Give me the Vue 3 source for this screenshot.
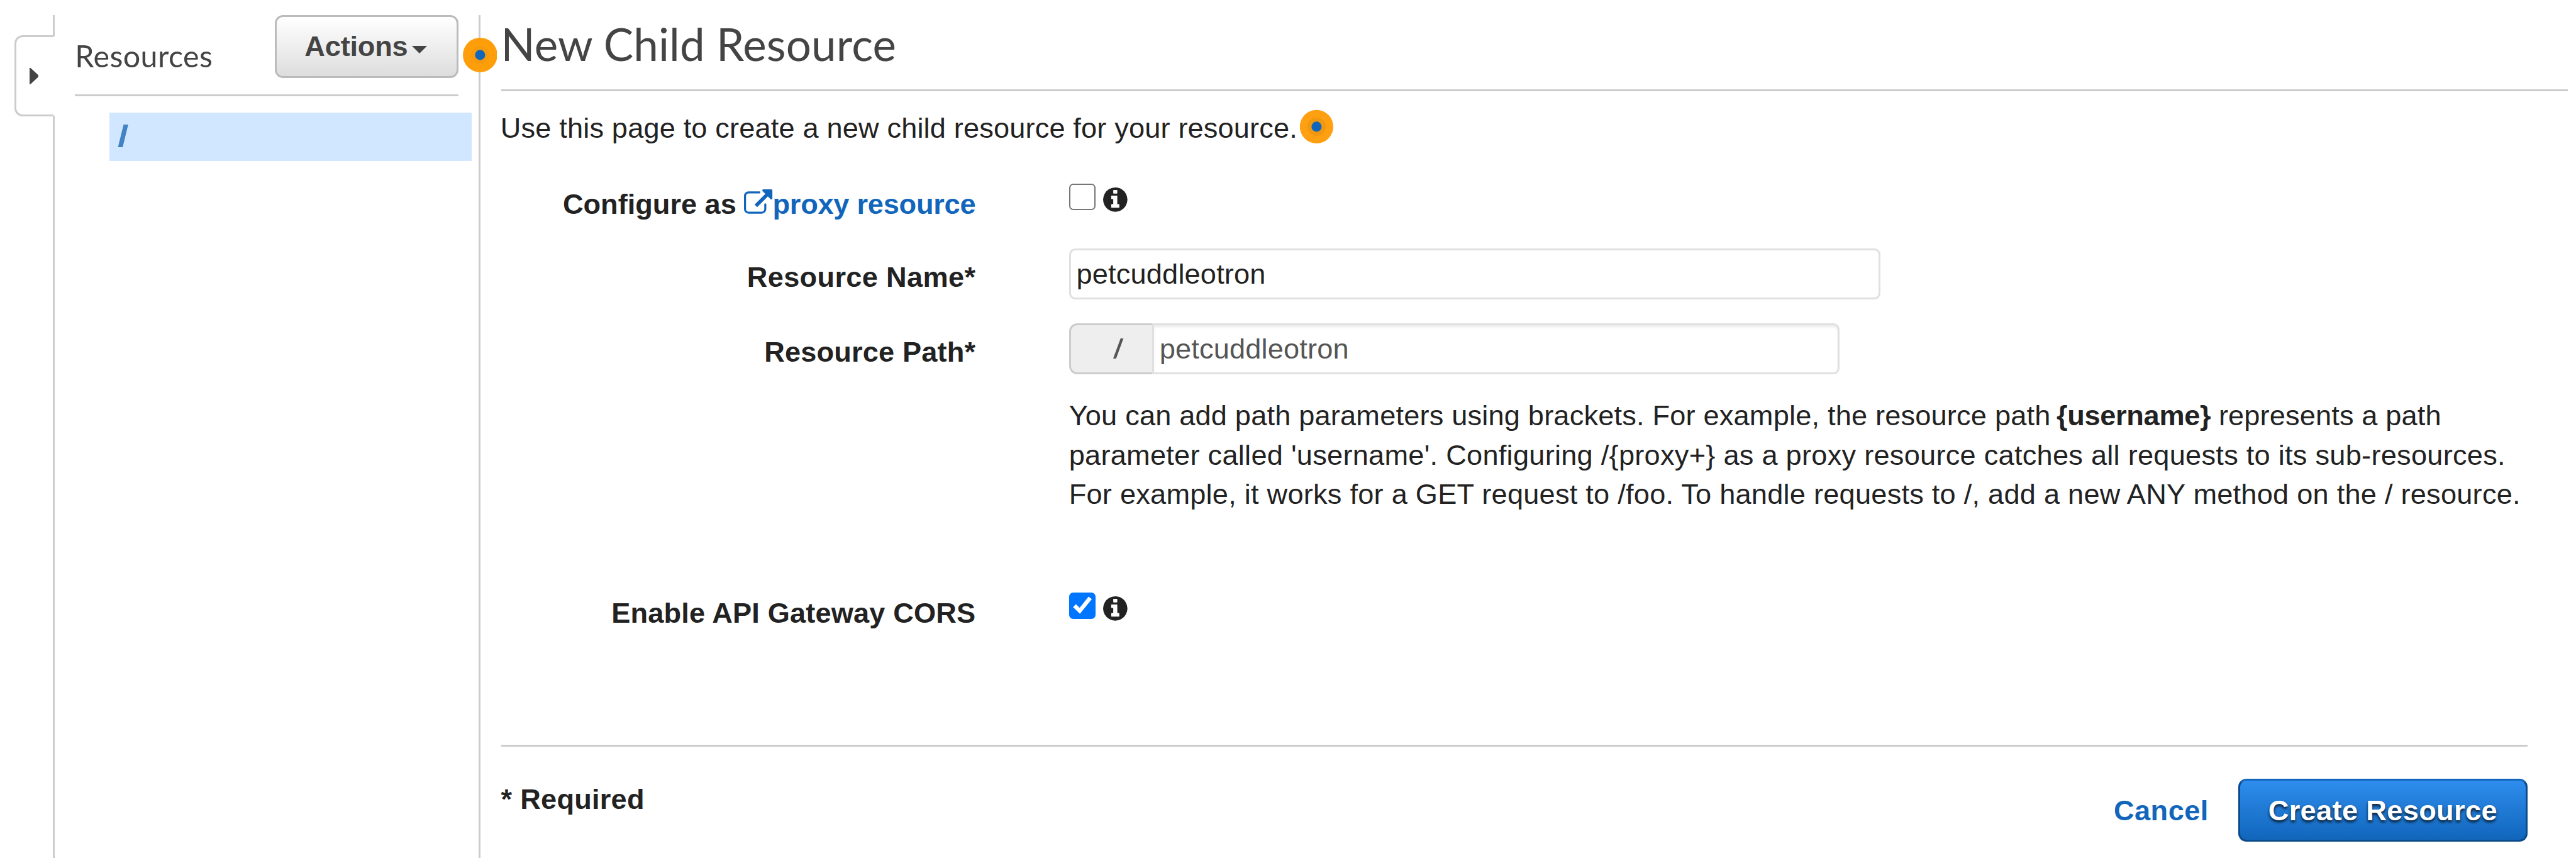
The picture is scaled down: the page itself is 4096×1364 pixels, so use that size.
<script setup>
const infoPath = 'M1152 1376v-160q0-14-9-23t-23-9h-96v-512q0-14-9-23t-23-9h-320q-14 0-23 9t-9 23v160q0 14 9 23t23 9h96v320h-96q-14 0-23 9t-9 23v160q0 14 9 23t23 9h448q14 0 23-9t9-23zm-128-896v-160q0-14-9-23t-23-9h-192q-14 0-23 9t-9 23v160q0 14 9 23t23 9h192q14 0 23-9t9-23zm640 416q0 209-103 385.5t-279.5 279.5-385.5 103-385.5-103-279.5-279.5-103-385.5 103-385.5 279.5-279.5 385.5-103 385.5 103 279.5 279.5 103 385.5z'
</script>

<template>
  <div class="page">
    <div class="rail">
      <div class="rail-top"></div>
      <div class="rail-tab">
        <svg class="rail-arrow" viewBox="0 0 18 32"><path d="M0 0h2l16 15v2L2 32H0z" /></svg>
      </div>
      <div class="rail-rest"></div>
    </div>

    <aside class="sidebar">
      <div class="side-head">
        <span class="side-title">Resources</span>
        <button class="actions"><span>Actions</span><i class="caret"></i></button>
      </div>
      <div class="tree-item"><span class="slash">/</span></div>
      <svg class="hotspot side-hotspot" viewBox="0 0 68 68">
        <circle cx="34" cy="34" r="34" fill="#ff9e0b" />
        <circle cx="34" cy="34" r="18" fill="#f89b0a" />
        <circle cx="34" cy="34" r="10" fill="#1166bb" />
      </svg>
    </aside>

    <main class="main">
      <h1 class="title">New Child Resource</h1>
      <div class="intro">
        <span class="intro-text">Use this page to create a new child resource for your resource.</span>
        <svg class="hotspot" viewBox="0 0 68 68">
          <circle cx="34" cy="34" r="33" fill="#ff9f12" />
          <circle cx="34" cy="34" r="18" fill="#f0980f" />
          <circle cx="34" cy="34" r="10" fill="#1166bb" />
        </svg>
      </div>

      <div class="row row-proxy">
        <div class="label">Configure as <a class="link"><svg class="ext" viewBox="0 0 1792 1536"><path d="M1408 928v320q0 119-84.5 203.5t-203.5 84.5h-832q-119 0-203.5-84.5t-84.5-203.5v-832q0-119 84.5-203.5t203.5-84.5h704q14 0 23 9t9 23v64q0 14-9 23t-23 9h-704q-66 0-113 47t-47 113v832q0 66 47 113t113 47h832q66 0 113-47t47-113v-320q0-14 9-23t23-9h64q14 0 23 9t9 23zm384-864v512q0 26-19 45t-45 19-45-19l-176-176-652 652q-10 10-23 10t-23-10l-114-114q-10-10-10-23t10-23l652-652-176-176q-19-19-19-45t19-45 45-19h512q26 0 45 19t19 45z" /></svg>proxy resource</a></div>
        <span class="check"></span>
        <svg class="info" viewBox="128 128 1536 1536"><path :d="infoPath" /></svg>
      </div>

      <div class="row row-name">
        <div class="label">Resource Name*</div>
        <div class="input">petcuddleotron</div>
      </div>

      <div class="row row-path">
        <div class="label">Resource Path*</div>
        <div class="addon"><span class="slash">/</span></div>
        <div class="input path">petcuddleotron</div>
      </div>

      <p class="help">
        <span class="line-a">You can add path parameters using brackets. For example, the resource path </span><b>{username}</b><span class="line-b"> represents a path</span><br />
        <span class="line-c">parameter called 'username'. Configuring /{proxy+} as a proxy resource catches all requests to its sub-resources.</span><br />
        <span class="line-d">For example, it works for a GET request to /foo. To handle requests to /, add a new ANY method on the / resource.</span>
      </p>

      <div class="row row-cors">
        <div class="label">Enable API Gateway CORS</div>
        <span class="check on"><svg viewBox="0 0 52 52"><path d="M7.7 28.7L13.3 23l7.4 7L38.3 8l6.4 5L21.3 42z" /></svg></span>
        <svg class="info" viewBox="128 128 1536 1536"><path :d="infoPath" /></svg>
      </div>

      <footer class="footer">
        <span class="required">* Required</span>
        <a class="cancel">Cancel</a>
        <button class="create">Create Resource</button>
      </footer>
    </main>
  </div>
</template>

<style>
html {
  font-size: 80.63px;
}
body {
  background: #fff;
}
</style>

<style scoped>
.page {
  display: flex;
  width: 50.8rem;
  height: 1364px;
  padding-top: 0.3rem;
  overflow: hidden;
  font: 0.56rem/0.78rem "Liberation Sans", Arial, sans-serif;
  color: #222;
  white-space: nowrap;
}
.page *,
.page {
  box-sizing: border-box;
}
.rail {
  display: flex;
  flex-direction: column;
  width: 1.08rem;
  flex: none;
}
.rail-top {
  height: 0.42rem;
  border-right: 0.04rem solid #ccc;
}
.rail-tab {
  display: flex;
  align-items: center;
  height: 1.6rem;
  margin: -0.02rem 0.02rem -0.02rem 0.28rem;
  padding-left: 0.26rem;
  border: 0.04rem solid #ccc;
  border-right: 0;
  border-radius: 0.16rem 0 0 0.16rem;
}
.rail-arrow {
  width: 0.18rem;
  height: 0.32rem;
  fill: #444;
}
.rail-rest {
  flex: 1;
  border-right: 0.04rem solid #ccc;
}
.sidebar {
  position: relative;
  width: 8.4rem;
  flex: none;
  border-right: 0.04rem solid #ccc;
}
.side-head {
  display: flex;
  justify-content: space-between;
  width: 7.56rem;
  height: 1.6rem;
  margin-left: 0.4rem;
  border-bottom: 0.04rem solid #ccc;
}
.side-title {
  margin-top: 0.43rem;
  font: 0.6rem/0.72rem Lato, sans-serif;
  letter-spacing: 0.005rem;
  color: #444;
}
.actions {
  display: flex;
  align-items: center;
  width: 3.62rem;
  height: 1.24rem;
  padding: 0.01rem 0 0 0.55rem;
  border: 0.04rem solid #bbb;
  border-radius: 0.16rem;
  background: linear-gradient(#fff, #ddd);
  font: bold 0.56rem/0.78rem "Liberation Sans", Arial, sans-serif;
  letter-spacing: -0.0025rem;
  color: #444;
}
.caret {
  margin-left: 0.08rem;
  margin-top: 0.11rem;
  border: 0.16rem solid transparent;
  border-top-color: #444;
  border-bottom: 0;
}
.tree-item {
  width: 7.14rem;
  height: 0.96rem;
  margin: 0.32rem 0 0 1.08rem;
  padding-left: 0.19rem;
  background: #d1e7ff;
  font-size: 0.6rem;
  font-weight: bold;
  line-height: 0.93rem;
  color: #4283c4;
}
.slash {
  display: inline-block;
  transform: scaleX(1.3);
}
.hotspot {
  width: 0.68rem;
  height: 0.68rem;
  margin-top: 0.014rem;
  flex: none;
}
.side-hotspot {
  position: absolute;
  right: -0.36rem;
  top: 0.43rem;
  z-index: 2;
}
.main {
  flex: 1;
  padding-left: 0.4rem;
}
.title {
  width: 40.76rem;
  height: 1.5rem;
  margin: 0;
  padding-top: 0.03rem;
  border-bottom: 0.04rem solid #ccc;
  font: 0.88rem/1.06rem Lato, sans-serif;
  letter-spacing: 0.0015rem;
  color: #444;
}
.intro {
  display: flex;
  height: 0.78rem;
  margin-top: 0.346rem;
}
.intro-text {
  width: 15.74rem;
  letter-spacing: 0.002rem;
  text-indent: -0.01rem;
}
.row {
  display: flex;
}
.label {
  width: 9.36rem;
  margin-right: 1.84rem;
  flex: none;
  text-align: right;
  font-weight: bold;
  white-space: pre;
}
.link {
  color: #16b;
  letter-spacing: -0.003rem;
}
.ext {
  width: 0.56rem;
  height: 0.48rem;
  fill: #16b;
}
.row-proxy {
  margin-top: 0.694rem;
  height: 0.78rem;
}
.row-name {
  margin-top: 0.5rem;
  height: 1rem;
}
.row-path {
  margin-top: 0.48rem;
  height: 1rem;
}
.row-name .label,
.row-path .label {
  padding-top: 0.186rem;
}
.row-name .label {
  letter-spacing: 0.0042rem;
}
.row-path .label {
  letter-spacing: 0.0022rem;
}
.row-proxy .label,
.row-cors .label {
  padding-top: 0.026rem;
}
.row-cors .label {
  letter-spacing: 0.002rem;
}
.check {
  width: 0.52rem;
  height: 0.52rem;
  flex: none;
  border: 0.025rem solid #767676;
  border-radius: 0.08rem;
}
.check.on {
  border: 0;
  background: #0075ff;
}
.check svg {
  display: block;
  width: 100%;
  height: 100%;
  fill: #fff;
}
.info {
  width: 0.48rem;
  height: 0.48rem;
  margin: 0.08rem 0 0 0.155rem;
  fill: #222;
}
.input {
  width: 16rem;
  height: 1rem;
  padding: 0.086rem 0 0 0.11rem;
  border: 0.04rem solid #e0e0e0;
  border-radius: 0.12rem;
  letter-spacing: 0.0022rem;
}
.addon {
  width: 1.64rem;
  height: 1rem;
  padding: 0.086rem 0 0 0.86rem;
  border: 0.04rem solid #ccc;
  border-right: 0;
  border-radius: 0.16rem 0 0 0.16rem;
  background: #eee;
  color: #555;
}
.path {
  width: 13.56rem;
  border-radius: 0 0.12rem 0.12rem 0;
  box-shadow: inset 0 0.04rem 0.04rem rgba(0, 0, 0, 0.075);
  color: #555;
}
.help {
  margin: 0.43rem 0 0 11.2rem;
}
.line-a {
  letter-spacing: 0.0024rem;
}
.help b {
  margin-left: -0.04rem;
  letter-spacing: -0.004rem;
}
.line-b {
  letter-spacing: 0.0018rem;
}
.line-c {
  letter-spacing: 0.0033rem;
}
.line-d {
  letter-spacing: 0.003rem;
}
.row-cors {
  margin-top: 1.53rem;
  height: 0.78rem;
}
.footer {
  display: flex;
  width: 39.96rem;
  margin-top: 2.22rem;
  padding-top: 0.64rem;
  border-top: 0.04rem solid #ccc;
  font-weight: bold;
}
.required {
  flex: 1;
  padding-top: 0.026rem;
  letter-spacing: 0.003rem;
}
.cancel {
  margin-right: 0.585rem;
  padding-top: 0.246rem;
  letter-spacing: 0.006rem;
  color: #16b;
}
.create {
  width: 5.7rem;
  height: 1.24rem;
  padding: 0.02rem 0 0;
  border: 0.04rem solid #0c4b8b;
  border-top-color: #16b;
  border-radius: 0.16rem;
  background: linear-gradient(#2e8ded, #16b);
  font: bold 0.56rem/0.78rem "Liberation Sans", Arial, sans-serif;
  letter-spacing: 0.0045rem;
  color: #fff;
  text-shadow: 0 0.04rem 0.05rem rgba(0, 0, 0, 0.8);
}
</style>
